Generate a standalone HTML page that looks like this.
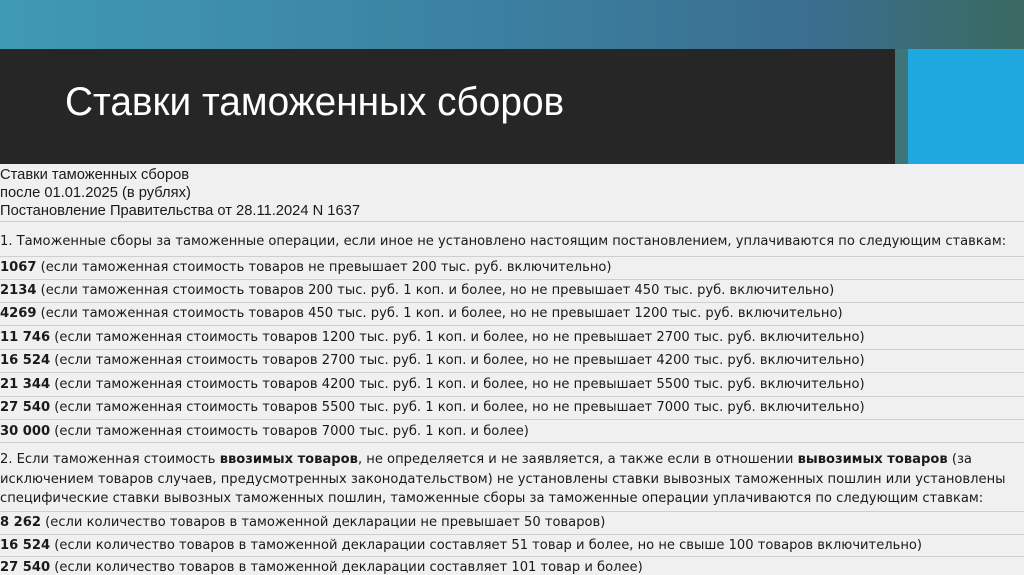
<!DOCTYPE html>
<html><head><meta charset="utf-8"><style>
body{margin:0;width:1024px;height:574px;overflow:hidden;background:#f0f0f0;font-family:"DejaVu Sans",sans-serif;color:#1a1a1a;position:relative}
.top{position:absolute;left:0;top:0;width:1024px;height:49px;background:linear-gradient(90deg,#3f9ab3 0%,#3b7fa0 50%,#3a6e8e 80%,#3a6a60 100%)}
.dark{position:absolute;left:0;top:49px;width:895px;height:115px;background:#262626}
.strip{position:absolute;left:895px;top:49px;width:13px;height:115px;background:#3e7578}
.blue{position:absolute;left:908px;top:49px;width:116px;height:115px;background:#1fa8e0}
.title{position:absolute;left:65px;top:80px;color:#fff;font-family:"Liberation Sans",sans-serif;font-size:40px;transform:scaleX(0.97);transform-origin:left;white-space:nowrap}
.hd{position:absolute;left:0;font-family:"Liberation Sans",sans-serif;font-size:15px;transform:scaleX(0.98);transform-origin:left;white-space:nowrap}
.r{position:absolute;left:0;font-size:13.1px;white-space:nowrap}
.sep{position:absolute;left:0;width:1024px;height:1px;background:#cfcfcf}
b{font-weight:bold}
</style></head><body>
<div class="top"></div><div class="dark"></div><div class="strip"></div><div class="blue"></div>
<div class="title">Ставки таможенных сборов</div>
<div class="hd" style="top:166px">Ставки таможенных сборов</div>
<div class="hd" style="top:184px">после 01.01.2025 (в рублях)</div>
<div class="hd" style="top:202px">Постановление Правительства от 28.11.2024 N 1637</div>
<div class="sep" style="top:221px"></div>
<div class="r" style="top:234px">1. Таможенные сборы за таможенные операции, если иное не установлено настоящим постановлением, уплачиваются по следующим ставкам:</div>
<div class="sep" style="top:256px"></div>
<div class="r" style="top:260px"><b>1067</b> (если таможенная стоимость товаров не превышает 200 тыс. руб. включительно)</div>
<div class="sep" style="top:279px"></div>
<div class="r" style="top:283px"><b>2134</b> (если таможенная стоимость товаров 200 тыс. руб. 1 коп. и более, но не превышает 450 тыс. руб. включительно)</div>
<div class="sep" style="top:302px"></div>
<div class="r" style="top:306px"><b>4269</b> (если таможенная стоимость товаров 450 тыс. руб. 1 коп. и более, но не превышает 1200 тыс. руб. включительно)</div>
<div class="sep" style="top:325px"></div>
<div class="r" style="top:330px"><b>11 746</b> (если таможенная стоимость товаров 1200 тыс. руб. 1 коп. и более, но не превышает 2700 тыс. руб. включительно)</div>
<div class="sep" style="top:349px"></div>
<div class="r" style="top:353px"><b>16 524</b> (если таможенная стоимость товаров 2700 тыс. руб. 1 коп. и более, но не превышает 4200 тыс. руб. включительно)</div>
<div class="sep" style="top:372px"></div>
<div class="r" style="top:377px"><b>21 344</b> (если таможенная стоимость товаров 4200 тыс. руб. 1 коп. и более, но не превышает 5500 тыс. руб. включительно)</div>
<div class="sep" style="top:396px"></div>
<div class="r" style="top:400px"><b>27 540</b> (если таможенная стоимость товаров 5500 тыс. руб. 1 коп. и более, но не превышает 7000 тыс. руб. включительно)</div>
<div class="sep" style="top:419px"></div>
<div class="r" style="top:424px"><b>30 000</b> (если таможенная стоимость товаров 7000 тыс. руб. 1 коп. и более)</div>
<div class="sep" style="top:442px"></div>
<div class="r" style="top:450px;line-height:19.5px">2. Если таможенная стоимость <b>ввозимых товаров</b>, не определяется и не заявляется, а также если в отношении <b>вывозимых товаров</b> (за<br>исключением товаров случаев, предусмотренных законодательством) не установлены ставки вывозных таможенных пошлин или установлены<br>специфические ставки вывозных таможенных пошлин, таможенные сборы за таможенные операции уплачиваются по следующим ставкам:</div>
<div class="sep" style="top:511px"></div>
<div class="r" style="top:515px"><b>8 262</b> (если количество товаров в таможенной декларации не превышает 50 товаров)</div>
<div class="sep" style="top:534px"></div>
<div class="r" style="top:538px"><b>16 524</b> (если количество товаров в таможенной декларации составляет 51 товар и более, но не свыше 100 товаров включительно)</div>
<div class="sep" style="top:556px"></div>
<div class="r" style="top:560px"><b>27 540</b> (если количество товаров в таможенной декларации составляет 101 товар и более)</div>
</body></html>
